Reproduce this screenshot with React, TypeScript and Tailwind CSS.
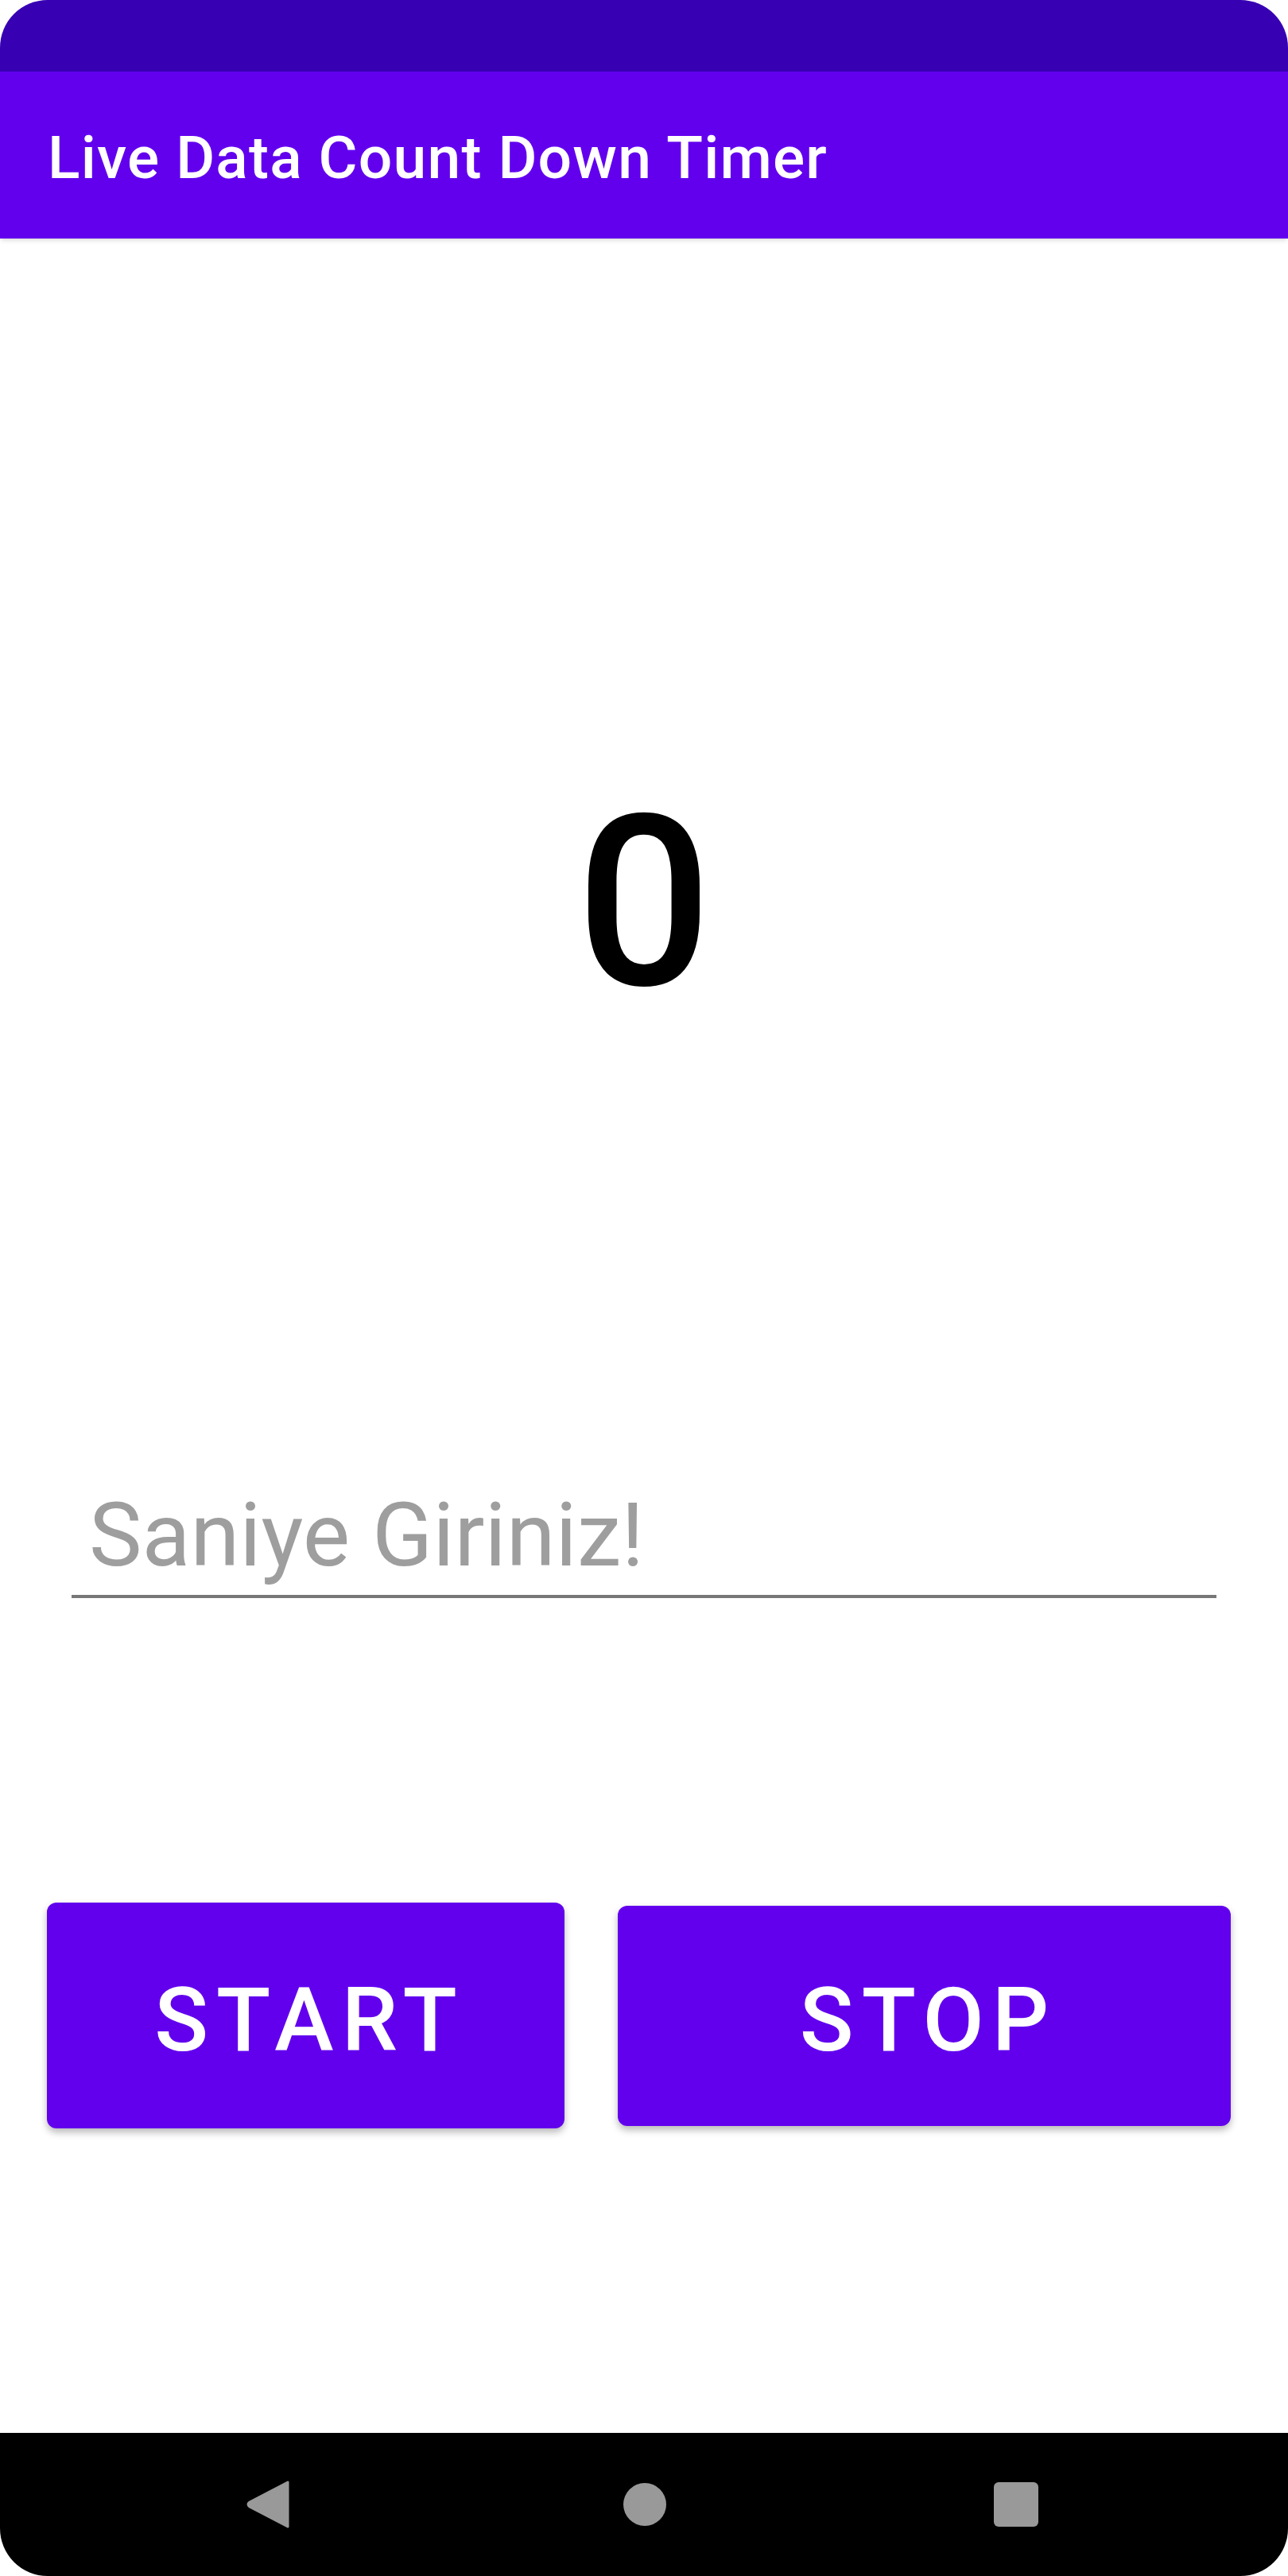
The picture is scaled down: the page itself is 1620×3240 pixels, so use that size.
import React from "react";

const NavBar: React.FC = () => {
  return (
    <div className="h-[180px] bg-black flex items-center pl-[310px]">
      <svg width="54" height="60" viewBox="0 0 54 60">
        <path d="M52 2 L52 58 L4 33 Q0 30 4 27 Z" fill="#999999" stroke="#999999" strokeWidth="3" strokeLinejoin="round" />
      </svg>
      <div className="ml-[420px] w-[54px] h-[54px] rounded-full bg-[#999999]" />
      <div className="ml-[412px] w-[56px] h-[56px] rounded-[6px] bg-[#999999]" />
    </div>
  );
};

const App: React.FC = () => {
  return (
    <div className="w-[1620px] h-[3240px] bg-white font-['Roboto',sans-serif]">
      <div className="h-full flex flex-col rounded-[60px] overflow-hidden">
        <div className="h-[90px] bg-[#3700B3]" />
        <div className="h-[210px] bg-[#6200EE] shadow-md relative z-10 pt-[71px] pl-[60px]">
          <h1 className="text-white text-[75px] leading-none font-medium tracking-[0.016em]">
            Live Data Count Down Timer
          </h1>
        </div>

        <div className="flex-1 flex flex-col">
          <div className="mt-[686px] text-center text-black text-[300px] leading-none font-medium">0</div>

          <div className="mt-[589px] ml-[90px] w-[1440px] pl-[22px] pb-[19px] border-b-[4px] border-[#777777]">
            <span className="text-[112px] leading-none text-[#9E9E9E] block">Saniye Giriniz!</span>
          </div>

          <div className="mt-[383px] pl-[59px] flex items-center gap-[67px]">
            <button className="w-[651px] h-[284px] rounded-[12px] bg-[#6200EE] text-white text-[112px] font-medium leading-none tracking-[0.09em] pl-[10px] pt-[12px] shadow-[0_5px_10px_rgba(0,0,0,0.28)]">
              START
            </button>
            <button className="w-[771px] h-[277px] rounded-[12px] bg-[#6200EE] text-white text-[112px] font-medium leading-none tracking-[0.09em] pl-[10px] pt-[12px] shadow-[0_5px_10px_rgba(0,0,0,0.28)]">
              STOP
            </button>
          </div>
        </div>

        <NavBar />
      </div>
    </div>
  );
};

export default App;
